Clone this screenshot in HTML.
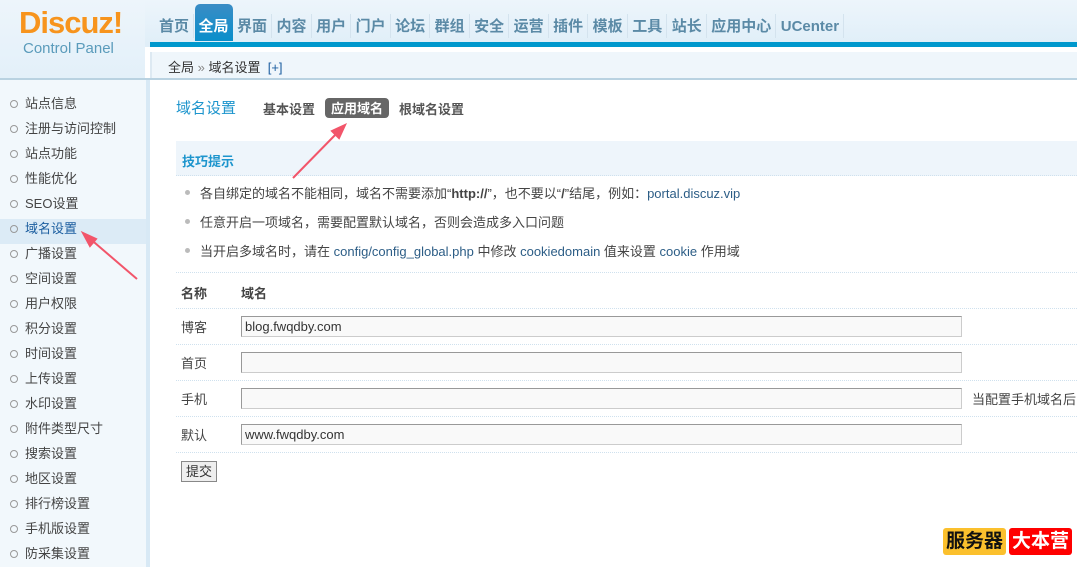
<!DOCTYPE html>
<html><head><meta charset="utf-8"><style>
*{margin:0;padding:0;box-sizing:border-box}
body{width:1077px;height:567px;overflow:hidden;background:#fff;font-family:"Liberation Sans","Noto Sans CJK SC",sans-serif;font-size:12px;color:#333;position:relative}
.hd{position:absolute;left:0;top:0;width:1077px;height:47px;background:linear-gradient(#edf5fb,#dfeef8)}
.lhd{position:absolute;left:0;top:0;width:145px;height:78px;background:linear-gradient(#edf5fb,#e3f0f9)}
.logo{position:absolute;left:19px;top:5px;font:bold 31px "Liberation Sans",sans-serif;color:#f7941d;letter-spacing:-1px}
.cp{position:absolute;left:23px;top:40px;font-size:15px;color:#5a9bbb}
.leftbg{position:absolute;left:0;top:80px;width:150px;height:487px;background:#f2f8fc;border-right:4px solid #d8e9f5}
.nav{position:absolute;left:155px;top:14px;display:flex;font-size:15px;color:#5b8aa6;font-weight:bold;white-space:nowrap}
.nav span{padding:2px 4px;border-right:1px solid #d4e3ee;height:24px;line-height:22px;margin-right:0.5px}
.nav .on{background:linear-gradient(#3a8cc5,#0a8fcb);color:#fff;border-radius:5px 5px 0 0;margin-top:-10px;height:37px;padding-top:12px;border:none}
.bar{position:absolute;left:150px;top:42px;width:927px;height:5px;background:#0098cd}
.bc{position:absolute;left:150px;top:52px;width:927px;height:26px;background:#eff6fb;border-left:2px solid #dde9f2;padding:5px 0 0 16px;font-size:13px;color:#333}
.line{position:absolute;left:0;top:78px;width:1077px;height:2px;background:#b9d2e1}
.side{position:absolute;left:0;top:94px;width:146px}
.side div{height:25px;line-height:20px;padding-left:25px;font-size:13px;color:#444;position:relative}
.side div:before{content:"";position:absolute;left:10px;top:6px;width:6px;height:6px;border:1px solid #999;border-radius:50%}
.side .cur{background:#dcebf6;color:#1d5fa0}
.ttl{position:absolute;left:176px;top:97px;font-size:15px;color:#1d95cd}
.tabs{position:absolute;left:263px;top:99px;font-size:13px;font-weight:bold;color:#555;display:flex;gap:10px}
.tabs .a{background:#666;color:#fff;border-radius:4px;padding:0 6px;margin-top:-1px}
.tip{position:absolute;left:176px;top:141px;width:901px;height:35px;background:#eef5fb;border-bottom:1px dotted #cfe1ee;padding:10px 6px;color:#1d95cd;font-weight:bold;font-size:13px}
.li{position:absolute;left:185px;font-size:13px;color:#444;white-space:nowrap}
.li:before{content:"";display:inline-block;width:5px;height:5px;background:#bbb;border-radius:50%;margin-right:10px;vertical-align:3px}
.hl{color:#2c5d86}
.rule{position:absolute;left:176px;width:901px;border-top:1px dotted #cfe1ee}
.cell{position:absolute;font-size:13px;color:#444;white-space:nowrap}
.inp{position:absolute;left:241px;width:721px;height:21px;border:1px solid #999;border-right-color:#ccc;border-bottom-color:#ccc;background:#f9f9f9;font-size:13px;padding:2px 3px;color:#333}
.btn{position:absolute;left:181px;top:461px;width:36px;height:21px;border:1px solid #888;background:#eee;font-size:13px;text-align:center;line-height:19px}
.badge{position:absolute;top:528px;height:27px;font-weight:bold;font-size:19px;line-height:27px;padding:0 3px;border-radius:3px}
</style></head><body>
<div class="hd"></div>
<div class="lhd"></div>
<div class="logo">Discuz!</div><div class="cp">Control Panel</div>
<div class="leftbg"></div>
<div class="bar"></div>
<div class="nav"><span>首页</span><span class="on">全局</span><span>界面</span><span>内容</span><span>用户</span><span>门户</span><span>论坛</span><span>群组</span><span>安全</span><span>运营</span><span>插件</span><span>模板</span><span>工具</span><span>站长</span><span>应用中心</span><span>UCenter</span></div>
<div class="bc">全局 <span style="color:#888">»</span> 域名设置 &nbsp;<span style="color:#1d5fa0">[+]</span></div>
<div class="line"></div>
<div class="side"><div>站点信息</div><div>注册与访问控制</div><div>站点功能</div><div>性能优化</div><div>SEO设置</div><div class="cur">域名设置</div><div>广播设置</div><div>空间设置</div><div>用户权限</div><div>积分设置</div><div>时间设置</div><div>上传设置</div><div>水印设置</div><div>附件类型尺寸</div><div>搜索设置</div><div>地区设置</div><div>排行榜设置</div><div>手机版设置</div><div>防采集设置</div></div>
<div class="ttl">域名设置</div>
<div class="tabs"><span>基本设置</span><span class="a">应用域名</span><span>根域名设置</span></div>
<div class="tip">技巧提示</div>
<div class="li" style="top:183px">各自绑定的域名不能相同，域名不需要添加“<b>http://</b>”，也不要以“<b>/</b>”结尾，例如：<span class="hl">portal.discuz.vip</span></div>
<div class="li" style="top:212px">任意开启一项域名，需要配置默认域名，否则会造成多入口问题</div>
<div class="li" style="top:241px">当开启多域名时，请在 <span class="hl">config/config_global.php</span> 中修改 <span class="hl">cookiedomain</span> 值来设置 <span class="hl">cookie</span> 作用域</div>
<div class="rule" style="top:272px"></div><div class="rule" style="top:308px"></div><div class="rule" style="top:344px"></div><div class="rule" style="top:380px"></div><div class="rule" style="top:416px"></div><div class="rule" style="top:452px"></div>
<div class="cell" style="left:181px;top:283px;font-weight:bold">名称</div><div class="cell" style="left:241px;top:283px;font-weight:bold">域名</div>
<div class="cell" style="left:181px;top:317px">博客</div><div class="inp" style="top:316px">blog.fwqdby.com</div>
<div class="cell" style="left:181px;top:353px">首页</div><div class="inp" style="top:352px"></div>
<div class="cell" style="left:181px;top:389px">手机</div><div class="inp" style="top:388px"></div><div class="cell" style="left:972px;top:389px">当配置手机域名后，</div>
<div class="cell" style="left:181px;top:425px">默认</div><div class="inp" style="top:424px">www.fwqdby.com</div>
<div class="btn">提交</div>
<svg style="position:absolute;left:0;top:0" width="1077" height="567"><g stroke="#f2556a" stroke-width="2" fill="#f2556a"><line x1="293" y1="178" x2="340" y2="130"/><polygon points="345,125 332,131 339,138"/><line x1="137" y1="279" x2="88" y2="237"/><polygon points="83,233 90,246 96,239"/></g></svg>
<div class="badge" style="left:943px;background:#fbc02d;color:#111">服务器</div>
<div class="badge" style="left:1009px;background:#f00;color:#fff">大本营</div>
</body></html>
